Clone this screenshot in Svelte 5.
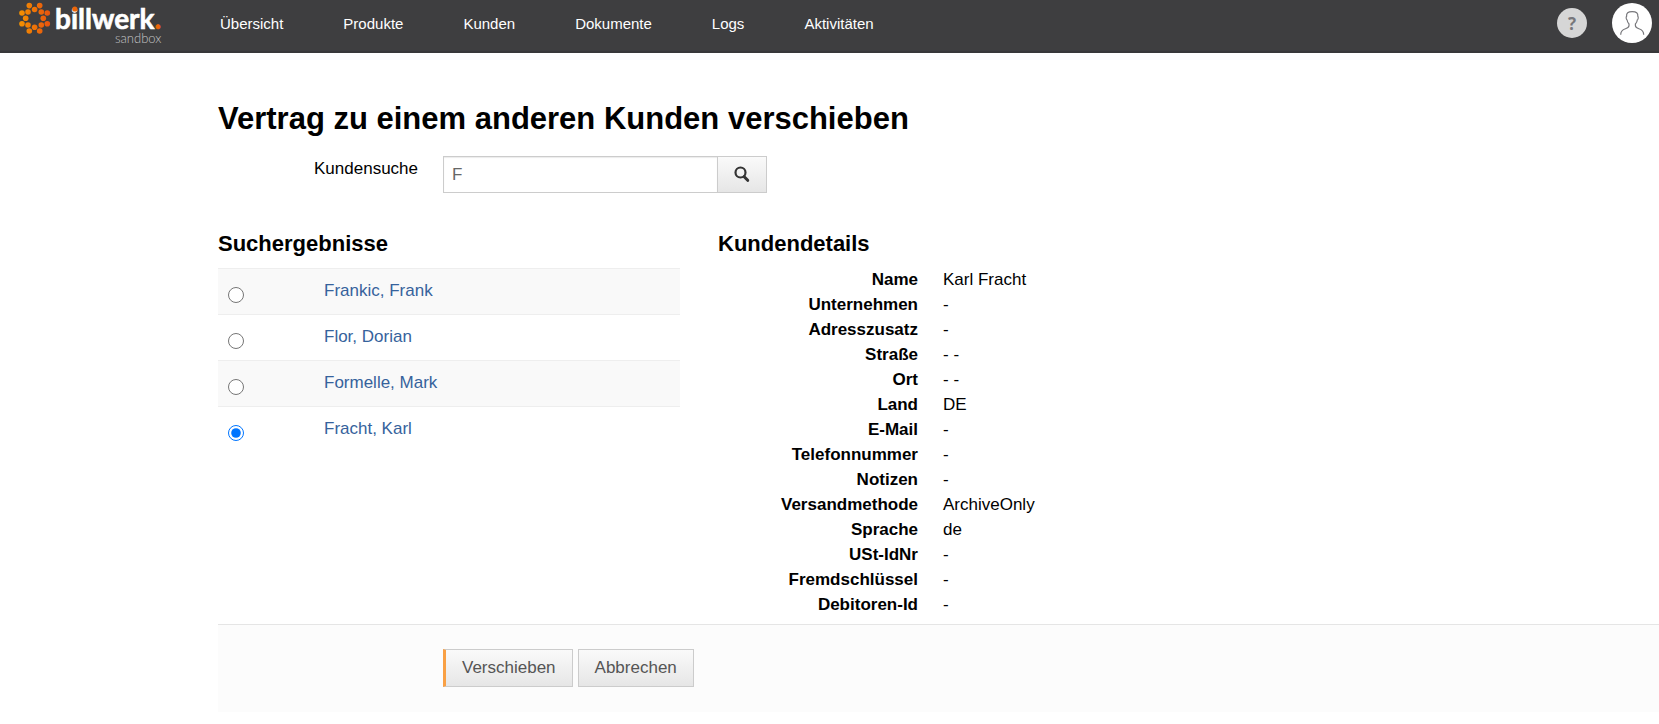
<script>
  const nav = ['Übersicht', 'Produkte', 'Kunden', 'Dokumente', 'Logs', 'Aktivitäten'];
  const results = ['Frankic, Frank', 'Flor, Dorian', 'Formelle, Mark', 'Fracht, Karl'];
  const details = [
    ['Name', 'Karl Fracht'],
    ['Unternehmen', '-'],
    ['Adresszusatz', '-'],
    ['Straße', '- -'],
    ['Ort', '- -'],
    ['Land', 'DE'],
    ['E-Mail', '-'],
    ['Telefonnummer', '-'],
    ['Notizen', '-'],
    ['Versandmethode', 'ArchiveOnly'],
    ['Sprache', 'de'],
    ['USt-IdNr', '-'],
    ['Fremdschlüssel', '-'],
    ['Debitoren-Id', '-']
  ];
  const dots = [
    [29.3, 5.6], [39.7, 5.6], [34.6, 9.5], [28, 12], [41.3, 12], [22, 13], [47.3, 13],
    [25.7, 18.3], [43.3, 18.3], [22, 23.7], [47.3, 23.7], [28, 25], [41.3, 25],
    [34.6, 27.3], [29.3, 31], [39.7, 31]
  ];
  let query = $state('F');
  let selected = $state('Fracht, Karl');
</script>

<header>
  <a class="logo" href="#start" aria-label="billwerk sandbox">
    <svg width="164" height="50" viewBox="0 0 164 50">
      <defs>
        <linearGradient id="flame" gradientUnits="userSpaceOnUse" x1="19" y1="0" x2="50" y2="0">
          <stop offset="0" stop-color="#f49200" />
          <stop offset="1" stop-color="#e8530e" />
        </linearGradient>
      </defs>
      {#each dots as [x, y]}
        <circle cx={x} cy={y} r="2.8" fill="url(#flame)" />
      {/each}
      <text class="word" x="55" y="29">billwerk<tspan class="stop">.</tspan></text>
      <circle cx="74.800" cy="9" r="2.6" fill="#ec6608" />
      <text class="sub" x="115" y="43">sandbox</text>
    </svg>
  </a>
  <nav>
    {#each nav as item}
      <a href="#{item}">{item}</a>
    {/each}
  </nav>
  <div class="tools">
    <button class="help" aria-label="Hilfe">?</button>
    <button class="user" aria-label="Benutzer">
      <svg width="40" height="40" viewBox="0 0 40 40" fill="none" stroke="#77777b" stroke-width="1.2">
        <path d="M8.7 31.7C8.7 27.500 11 26.500 13.500 25.700C16 24.900 17 24.300 17 22.500V21C15.900 20 15.300 18.500 15.100 17C14.200 16.800 13.800 13.800 14.600 13.200C14.200 10 16 8.700 20.200 8.700C24.400 8.700 26.200 10 25.800 13.200C26.600 13.800 26.200 16.800 25.300 17C25.100 18.500 24.500 20 23.400 21V22.500C23.400 24.300 24.400 24.900 26.900 25.700C29.400 26.500 31.700 27.500 31.700 31.700" />
      </svg>
    </button>
  </div>
</header>

<main>
  <h1>Vertrag zu einem anderen Kunden verschieben</h1>
  <div class="search">
    <label for="query">Kundensuche</label>
    <div class="group">
      <input id="query" type="text" bind:value={query} />
      <button aria-label="Suchen">
        <svg width="16" height="18" viewBox="0 0 16 18" fill="none" stroke="#333">
          <circle cx="6.500" cy="6.500" r="5" stroke-width="2.200" />
          <path d="M10.200 10.700L13.700 14.300" stroke-width="3" stroke-linecap="round" />
        </svg>
      </button>
    </div>
  </div>

  <div class="columns">
    <section class="results">
      <h2>Suchergebnisse</h2>
      <table>
        <tbody>
          {#each results as name}
            <tr>
              <td class="pick"><input type="radio" name="customer" value={name} aria-label={name} bind:group={selected} /></td>
              <td><a href="#{name}">{name}</a></td>
            </tr>
          {/each}
        </tbody>
      </table>
    </section>
    <section class="details">
      <h2>Kundendetails</h2>
      <dl>
        {#each details as [term, value]}
          <dt>{term}</dt>
          <dd>{value}</dd>
        {/each}
      </dl>
    </section>
  </div>

  <div class="actions">
    <button class="primary">Verschieben</button>
    <button>Abbrechen</button>
  </div>
</main>

<style>
  :global(body) {
    background: #fff;
    color: #000;
    font: 17px/25px "Liberation Sans", Arial, sans-serif;
  }
  header {
    display: flex;
    height: 53px;
    box-sizing: border-box;
    background: #3e3e40;
    border-bottom: 2px solid #38383a;
  }
  .logo {
    width: 190px;
  }
  .logo svg {
    display: block;
  }
  .word {
    font: 700 28px Lato, sans-serif;
    fill: #fff;
    stroke: #fff;
    stroke-width: 0.6;
  }
  .stop {
    fill: #ec6608;
    stroke: #ec6608;
  }
  .sub {
    font: 300 13px Lato, sans-serif;
    fill: #c4c4c6;
  }
  nav {
    display: flex;
    flex: 1;
  }
  nav a {
    padding: 14px 30px;
    color: #fff;
    font-size: 15px;
    line-height: 20px;
    text-decoration: none;
  }
  .tools {
    display: flex;
    align-items: center;
    gap: 25px;
    height: 46px;
    padding-right: 7px;
  }
  .tools button {
    padding: 0;
    border: 0;
    border-radius: 50%;
  }
  .help {
    width: 30px;
    height: 30px;
    background: #d6d6d6;
    color: #77777b;
    font: 700 17px "Open Sans", sans-serif;
  }
  .user {
    width: 40px;
    height: 40px;
    background: #fff;
  }
  .user svg {
    display: block;
  }
  main {
    padding: 46px 0 12px 218px;
  }
  h1 {
    margin: 0 0 17px;
    font-size: 31px;
    line-height: 40px;
  }
  .search {
    display: grid;
    grid-template-columns: 200px 324px;
    gap: 25px;
    margin-bottom: 37px;
  }
  .search label {
    text-align: right;
  }
  .group {
    display: flex;
    height: 37px;
  }
  .group input {
    flex: 1;
    min-width: 0;
    box-sizing: border-box;
    padding: 0 8px;
    border: 1px solid #ccc;
    border-right: 0;
    box-shadow: inset 0 1px 1px rgba(0, 0, 0, 0.08);
    color: #666;
    font: inherit;
  }
  .group button,
  .actions button {
    border: 1px solid #ccc;
    background: linear-gradient(#fafafa, #e6e6e6);
  }
  .group button {
    display: flex;
    align-items: center;
    justify-content: center;
    width: 50px;
    padding: 0;
  }
  .columns {
    display: flex;
    gap: 38px;
  }
  .results {
    width: 462px;
  }
  .details {
    flex: 1;
  }
  h2 {
    margin: 0 0 10px;
    font-size: 22px;
    line-height: 28px;
  }
  table {
    width: 100%;
    border-collapse: separate;
    border-spacing: 0;
  }
  td {
    height: 25px;
    padding: 9px 10px 11px;
    border-top: 1px solid #eee;
    vertical-align: top;
  }
  tr:nth-child(odd) td {
    background: #f9f9f9;
  }
  .pick {
    width: 76px;
  }
  .pick input {
    display: block;
    width: 16px;
    height: 16px;
    margin: 9px 0 0;
  }
  td a {
    color: #36629c;
    text-decoration: none;
  }
  .details h2 {
    margin-bottom: 9px;
  }
  dl {
    display: grid;
    grid-template-columns: 200px 1fr;
    column-gap: 25px;
    margin: 0 0 7px;
  }
  dt {
    font-weight: 700;
    text-align: right;
  }
  dd {
    margin: 0;
  }
  .actions {
    display: flex;
    gap: 5px;
    padding: 24px 0 25px 225px;
    border-top: 1px solid #e5e5e5;
    background: #fcfcfc;
  }
  .actions button {
    height: 38px;
    padding: 0 16px 1px;
    color: #555;
    font: inherit;
  }
  .actions .primary {
    border-left: 3px solid #f9a044;
  }
</style>
